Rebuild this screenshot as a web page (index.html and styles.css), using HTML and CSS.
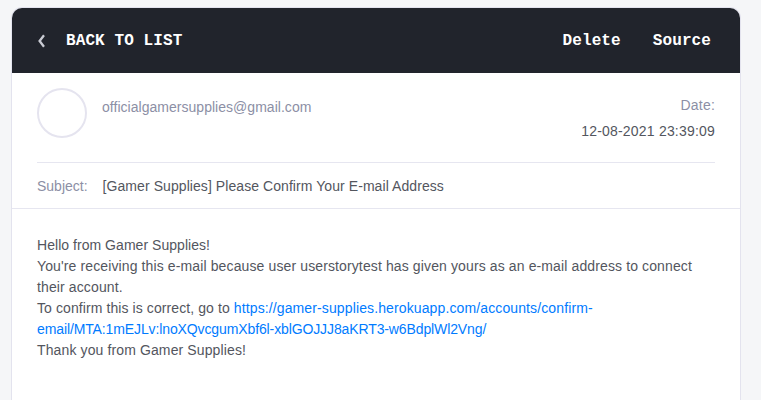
FILE: index.html
```html
<!DOCTYPE html>
<html lang="en">
<head>
<meta charset="utf-8">
<title>Please Confirm Your E-mail Address</title>
<link rel="stylesheet" href="styles.css">
</head>
<body>
<main class="card">
  <header class="toolbar">
    <a class="back"><svg class="chevron" width="9" height="14" viewBox="0 0 9 14"><path d="M7 1.3 2.6 7 7 12.7"/></svg><span>BACK TO LIST</span></a>
    <nav class="actions"><a>Delete</a><a>Source</a></nav>
  </header>
  <section class="meta">
    <div class="sender">
      <div class="avatar"></div>
      <div class="address">officialgamersupplies@gmail.com</div>
      <div class="date"><span class="label">Date:</span><span>12-08-2021 23:39:09</span></div>
    </div>
    <div class="subject"><span class="label">Subject:</span><span class="subject-text">[Gamer Supplies] Please Confirm Your E-mail Address</span></div>
  </section>
  <article class="message">
    <p class="greeting">Hello from Gamer Supplies!</p>
    <p>You're receiving this e-mail because user userstorytest has given yours as an e-mail address to connect<br>their account.</p>
    <p><span class="lead">To confirm this is correct, go to </span><a class="link">https://gamer-supplies.herokuapp.com/accounts/confirm-<br><span class="token">email/MTA:1mEJLv:lnoXQvcgumXbf6l-xblGOJJJ8aKRT3-w6BdplWl2Vng/</span></a></p>
    <p>Thank you from Gamer Supplies!</p>
  </article>
</main>
</body>
</html>
```
FILE: styles.css
```css
* { box-sizing: border-box; }
body {
  margin: 0;
  height: 400px;
  padding: 7px 20px 0 11px;
  background: #f5f6f8;
  color: #53565e;
  font: 14px/21px "Liberation Sans", Arial, sans-serif;
}
p { margin: 0; white-space: nowrap; }
.card {
  height: 393px;
  border: 1px solid #e3e3ee;
  border-bottom: 0;
  border-radius: 11px 11px 0 0;
  background: #fff;
  overflow: hidden;
}
.toolbar {
  display: flex;
  justify-content: space-between;
  align-items: center;
  height: 65px;
  padding: 0 29px 0 25px;
  background: #21242c;
  color: #fff;
  font: bold 16px/20px "Courier New", "Liberation Mono", monospace;
  letter-spacing: 0.1px;
}
.back { display: flex; align-items: center; gap: 20px; }
.chevron { fill: none; stroke: #c9cbd3; stroke-width: 2.3; }
.actions { display: flex; gap: 32px; }
.meta { padding: 0 25px; border-bottom: 1px solid #e6e6f0; }
.sender {
  display: flex;
  height: 90px;
  padding-top: 15px;
  border-bottom: 1px solid #e6e6f0;
}
.avatar {
  width: 50px;
  height: 50px;
  border: 2px solid #e5e4ef;
  border-radius: 50%;
}
.address { margin: 9px 0 0 15px; color: #8c8fa5; letter-spacing: 0.03px; }
.date {
  display: flex;
  flex-direction: column;
  gap: 5px;
  margin: 7px 0 0 auto;
  text-align: right;
  letter-spacing: 0.2px;
}
.label { color: #8c8fa5; }
.subject { display: flex; gap: 15px; height: 45px; padding-top: 13px; }
.subject-text { letter-spacing: 0.07px; }
.message { padding: 26px 25px 0; letter-spacing: 0.12px; }
.greeting { letter-spacing: 0.04px; }
.lead { letter-spacing: 0.09px; }
.link { color: #007bff; }
.token { letter-spacing: -0.115px; }
```
